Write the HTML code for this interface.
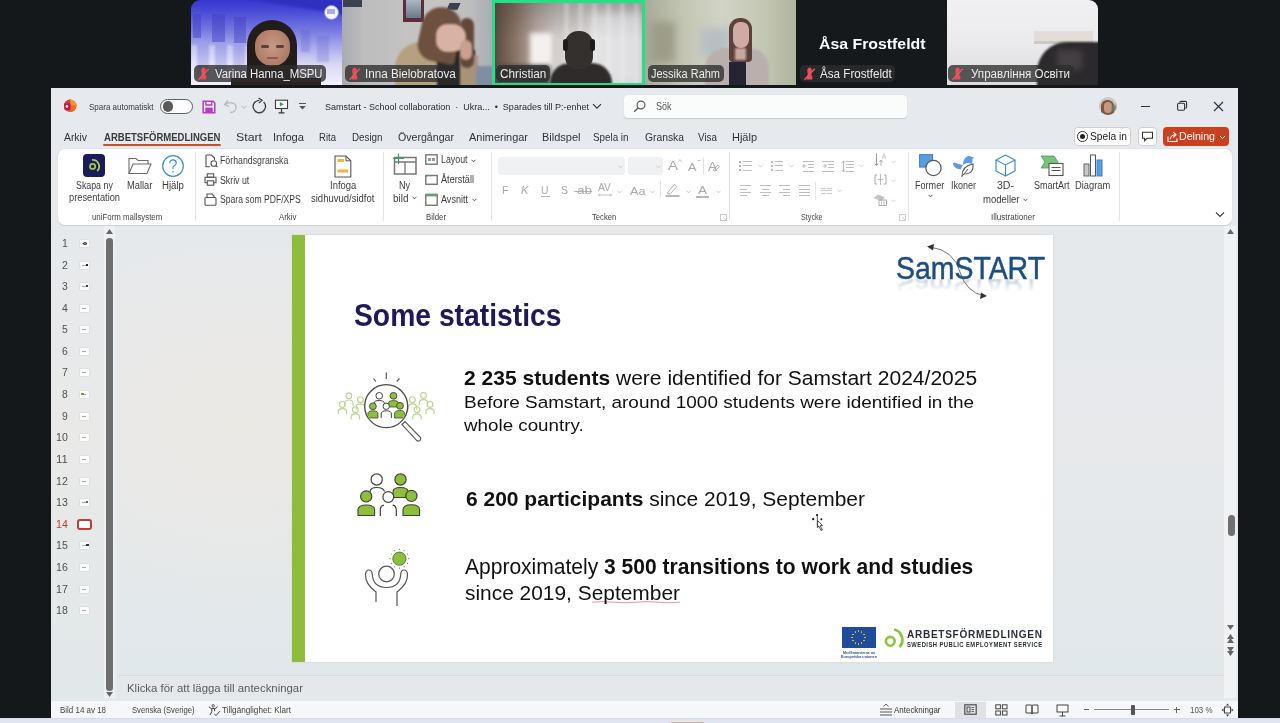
<!DOCTYPE html><html><head><meta charset="utf-8"><style>
*{margin:0;padding:0;box-sizing:border-box}
html,body{width:1280px;height:723px;overflow:hidden;background:#15181b;font-family:"Liberation Sans",sans-serif;position:relative}
.a{position:absolute}
.tx{position:absolute;white-space:nowrap;line-height:normal;transform-origin:0 0}
.t{position:absolute;top:0;height:85px;overflow:hidden}
.lbl{position:absolute;top:64.5px;height:17px;border-radius:5px;background:rgba(45,45,45,0.78)}
svg{position:absolute;overflow:visible}

</style></head><body>
<div class="t" style="left:191px;width:151px;border-radius:9px 0 0 0;background:linear-gradient(180deg,#3636cf 0%,#4a4cd6 14%,#7478e0 35%,#a8aaec 55%,#d6d6f5 75%,#f3f2fb 100%)">
<div class="a" style="left:20px;top:-8px;width:160px;height:14px;background:#2f2fc0;transform:rotate(9deg);filter:blur(1.5px)"></div>
<div class="a" style="left:2px;top:14px;width:8px;height:24px;background:rgba(60,60,190,.45);filter:blur(.6px)"></div>
<div class="a" style="left:21px;top:14px;width:13px;height:28px;background:rgba(60,60,190,.45);filter:blur(.6px)"></div>
<div class="a" style="left:43px;top:17px;width:12px;height:26px;background:rgba(60,60,190,.42);filter:blur(.6px)"></div>
<div class="a" style="left:110px;top:30px;width:9px;height:22px;background:rgba(90,90,200,.3);filter:blur(.8px)"></div>
<div class="a" style="left:126px;top:36px;width:12px;height:26px;background:rgba(90,90,200,.25);filter:blur(.8px)"></div>
<div class="a" style="left:0;top:45px;width:60px;height:30px;background:repeating-linear-gradient(90deg,rgba(255,255,255,.35) 0 6px,rgba(140,140,220,.25) 6px 18px);filter:blur(1px)"></div>
<div class="a" style="left:56px;top:20px;width:50px;height:75px;border-radius:25px 25px 6px 6px;background:#241c1a;filter:blur(.7px)"></div>
<div class="a" style="left:64px;top:30px;width:35px;height:36px;border-radius:15px 15px 17px 17px;background:radial-gradient(ellipse at 50% 45%,#c69a84,#b07e68 65%,#946553);filter:blur(.5px)"></div><div class="a" style="left:70px;top:45px;width:8px;height:3px;border-radius:2px;background:#5e4036;filter:blur(.6px)"></div><div class="a" style="left:85px;top:45px;width:8px;height:3px;border-radius:2px;background:#5e4036;filter:blur(.6px)"></div><div class="a" style="left:76px;top:57px;width:11px;height:2px;border-radius:1px;background:#8a5a4e;filter:blur(.6px)"></div>
<div class="a" style="left:40px;top:78px;width:90px;height:10px;background:#2a2220"></div>
<div class="a" style="left:132.5px;top:4.5px;width:15px;height:15px;border-radius:50%;background:#f4f4fb;border:1.6px solid #8d8fd8"></div>
<div class="a" style="left:136px;top:9px;width:8px;height:5px;background:#7b7ec8;opacity:.6"></div>
</div>
<div class="t" style="left:342px;width:150px;background:linear-gradient(90deg,#a9abb0 0%,#bdbdbe 15%,#c4c3c2 45%,#c6c5c3 65%,#bdbdbd 85%,#a9adb3 100%)">
<div class="a" style="left:1px;top:-2px;width:19px;height:9px;background:#3d414d;filter:blur(.5px)"></div>
<div class="a" style="left:61px;top:-2px;width:21px;height:23.5px;background:#5e2c3a;filter:blur(.4px)"></div>
<div class="a" style="left:63.5px;top:0px;width:15.5px;height:18px;background:linear-gradient(180deg,#aab8c4,#6a7785);filter:blur(.4px)"></div>
<div class="a" style="left:106px;top:3px;width:11px;height:7px;background:#394050;transform:skewX(-25deg);filter:blur(.6px)"></div>
<div class="a" style="left:53px;top:42px;width:60px;height:50px;border-radius:26px 10px 0 0;background:#b7a07f;filter:blur(1px)"></div>
<div class="a" style="left:95px;top:50px;width:38px;height:40px;background:#2b2727;filter:blur(1px)"></div>
<div class="a" style="left:118px;top:55px;width:18px;height:35px;background:#a89378;filter:blur(1px)"></div>
<div class="a" style="left:78px;top:7px;width:40px;height:55px;border-radius:22px 22px 4px 18px;background:#6d503e;transform:rotate(12deg);filter:blur(1px)"></div>
<div class="a" style="left:118px;top:18px;width:14px;height:50px;border-radius:10px;background:#62483a;filter:blur(1px)"></div>
<div class="a" style="left:94px;top:24px;width:30px;height:28px;border-radius:12px 14px 16px 12px;background:#d8b3a3;filter:blur(.8px)"></div>
<div class="a" style="left:118px;top:40px;width:12px;height:20px;border-radius:6px;background:#caa090;filter:blur(.8px)"></div>
<div class="a" style="left:134px;top:66px;width:18px;height:22px;background:#7f8ea3;filter:blur(1px)"></div>
</div>
<div class="t" style="left:492px;width:153px;background:#22e083">
<div class="a" style="left:3px;top:2.5px;width:147px;height:80.5px;overflow:hidden;background:linear-gradient(90deg,#5b4a40 0%,#8b7466 14%,#b9aca5 28%,#d3cfcd 42%,#dcdad9 60%,#d4d4d6 80%,#cacbce 100%)">
<div class="a" style="left:0;top:0;width:147px;height:81px;background:linear-gradient(180deg,rgba(70,60,55,.35) 0%,rgba(70,60,55,0) 45%)"></div><div class="a" style="left:60px;top:0;width:90px;height:81px;background:repeating-linear-gradient(90deg,rgba(255,255,255,0) 0 9px,rgba(255,255,255,.25) 9px 14px);filter:blur(1.5px)"></div><div class="a" style="left:35px;top:30px;width:22px;height:35px;background:#f3f0ee;filter:blur(2.5px)"></div>
<div class="a" style="left:95px;top:10px;width:50px;height:70px;background:rgba(240,240,242,.5);filter:blur(4px)"></div>
<div class="a" style="left:0px;top:62px;width:55px;height:25px;background:#4d4a4b;filter:blur(2px)"></div>
<div class="a" style="left:55px;top:60px;width:62px;height:30px;border-radius:20px 20px 0 0;background:#2e2b2a;filter:blur(1px)"></div>
<div class="a" style="left:70px;top:28px;width:28px;height:38px;border-radius:13px 13px 12px 12px;background:#34302d;filter:blur(.7px)"></div>
<div class="a" style="left:68px;top:36px;width:5px;height:12px;border-radius:3px;background:#1d1b1b"></div>
<div class="a" style="left:95px;top:36px;width:5px;height:12px;border-radius:3px;background:#1d1b1b"></div>
</div></div>
<div class="t" style="left:645px;width:151px;background:linear-gradient(90deg,#a8ab97 0%,#c3c5b3 25%,#d1d3c6 50%,#c6c9b6 75%,#b1b59f 100%)">
<div class="a" style="left:5px;top:22px;width:25px;height:40px;background:#9c9c88;filter:blur(4px)"></div>
<div class="a" style="left:55px;top:28px;width:30px;height:28px;background:#b6c0c3;filter:blur(4px)"></div>
<div class="a" style="left:60px;top:48px;width:64px;height:42px;border-radius:20px 20px 0 0;background:#b9b0ad;filter:blur(.8px)"></div>
<div class="a" style="left:84px;top:62px;width:17px;height:28px;background:#252433;filter:blur(.6px)"></div>
<div class="a" style="left:84px;top:18px;width:23px;height:44px;border-radius:11px 11px 4px 4px;background:#5c403a;filter:blur(.7px)"></div>
<div class="a" style="left:88px;top:22px;width:16px;height:26px;border-radius:8px 8px 9px 9px;background:#d0aaa4;filter:blur(.5px)"></div>
<div class="a" style="left:90px;top:48px;width:11px;height:12px;background:#c9a7a2;filter:blur(.8px)"></div>
</div>
<div class="t" style="left:796px;width:151px;background:#16191c"></div>
<div class="t" style="left:947px;width:151px;border-radius:0 9px 0 0;background:linear-gradient(180deg,#f1f1f3 0%,#ebeaec 50%,#dcdbdd 100%)">
<div class="a" style="left:87px;top:31px;width:59px;height:10px;background:#e2ddd8;filter:blur(.6px)"></div><div class="a" style="left:87px;top:41px;width:59px;height:3px;background:#cfc9c4;filter:blur(.6px)"></div>
<div class="a" style="left:90px;top:42px;width:70px;height:50px;border-radius:30px 0 0 0;background:#2b292b;filter:blur(1px)"></div>
<div class="a" style="left:110px;top:50px;width:25px;height:20px;background:#444044;filter:blur(3px)"></div>
</div>
<div class="lbl" style="left:194px;width:132px"></div>
<svg style="left:196.5px;top:67px" width="13" height="14" viewBox="0 0 13 14"><path d="M5 1.2 Q6.8 -0.2 8.4 1.4 Q9.2 2.6 8.6 5 L8.2 7.5 Q9.6 9 9.4 12.6 H3.6 Q3.4 9 4.8 7.5 L4.4 5 Q3.8 2.6 5 1.2 Z" fill="#ee4a55"/><path d="M1.5 12.8 L11.8 1.8" stroke="#e05a6a" stroke-width="1.3"/></svg>
<div class="lbl" style="left:345px;width:114px"></div>
<svg style="left:347.5px;top:67px" width="13" height="14" viewBox="0 0 13 14"><path d="M5 1.2 Q6.8 -0.2 8.4 1.4 Q9.2 2.6 8.6 5 L8.2 7.5 Q9.6 9 9.4 12.6 H3.6 Q3.4 9 4.8 7.5 L4.4 5 Q3.8 2.6 5 1.2 Z" fill="#ee4a55"/><path d="M1.5 12.8 L11.8 1.8" stroke="#e05a6a" stroke-width="1.3"/></svg>
<div class="lbl" style="left:495.5px;width:54.5px"></div>
<div class="lbl" style="left:648px;width:76px"></div>
<div class="lbl" style="left:800px;width:95px"></div>
<svg style="left:802.5px;top:67px" width="13" height="14" viewBox="0 0 13 14"><path d="M5 1.2 Q6.8 -0.2 8.4 1.4 Q9.2 2.6 8.6 5 L8.2 7.5 Q9.6 9 9.4 12.6 H3.6 Q3.4 9 4.8 7.5 L4.4 5 Q3.8 2.6 5 1.2 Z" fill="#ee4a55"/><path d="M1.5 12.8 L11.8 1.8" stroke="#e05a6a" stroke-width="1.3"/></svg>
<div class="lbl" style="left:948px;width:126px"></div>
<svg style="left:950.5px;top:67px" width="13" height="14" viewBox="0 0 13 14"><path d="M5 1.2 Q6.8 -0.2 8.4 1.4 Q9.2 2.6 8.6 5 L8.2 7.5 Q9.6 9 9.4 12.6 H3.6 Q3.4 9 4.8 7.5 L4.4 5 Q3.8 2.6 5 1.2 Z" fill="#ee4a55"/><path d="M1.5 12.8 L11.8 1.8" stroke="#e05a6a" stroke-width="1.3"/></svg>
<div class="a" style="left:0;top:85px;width:1280px;height:3px;background:#15181b"></div>
<div class="a" style="left:51px;top:88px;width:1187px;height:630px;background:#e6e9ed"></div>
<div class="a" style="left:0;top:718px;width:1280px;height:5px;background:linear-gradient(180deg,#d3d8e0 0,#dfe5f0 1.5px,#dfe4f1 100%)"></div><div class="a" style="left:671px;top:721.5px;width:33px;height:1.5px;background:#eaa3a3;border-radius:1px 1px 0 0"></div>
<svg style="left:63px;top:99px" width="14" height="14" viewBox="0 0 14 14"><circle cx="7.2" cy="6.8" r="6.2" fill="#e9482f"/><path d="M7.2 6.8 V0.6 A6.2 6.2 0 0 1 13.4 6.8 Z" fill="#f89a24"/><path d="M7.2 6.8 H13.4 A6.2 6.2 0 0 1 7.2 13 Z" fill="#ec6a2c"/><path d="M7.2 6.8 V0.6 A6.2 6.2 0 0 0 1 6.8 Z" fill="#dc3a38"/><rect x="1.2" y="4.2" width="6.3" height="6.8" rx="1.3" fill="#b41f4a"/><circle cx="3.9" cy="7.4" r="1.3" fill="#f4e6f0"/></svg>
<div class="a" style="left:160px;top:98.5px;width:33px;height:15.5px;border:1.2px solid #5e5e5e;border-radius:8px;background:#fdfdfd"></div>
<div class="a" style="left:162.5px;top:101px;width:10.5px;height:10.5px;border-radius:50%;background:#5a5a5a"></div>
<svg style="left:202px;top:99.5px" width="14" height="14" viewBox="0 0 14 14"><path d="M1.2 1.2 H11 L12.8 3 V12.8 H1.2 Z" fill="none" stroke="#b23fc2" stroke-width="1.5"/><path d="M3.8 1.2 V5 H9.8 V1.2" fill="none" stroke="#b23fc2" stroke-width="1.3"/><rect x="3.3" y="7.6" width="7.4" height="5.2" fill="#b23fc2"/></svg>
<svg style="left:223px;top:99px" width="26" height="15" viewBox="0 0 26 15"><path d="M5 1.5 L1.5 5.5 L6 7.5" fill="none" stroke="#b8b8b8" stroke-width="1.3"/><path d="M2 5.5 C6 2.5,13 3,13 8.5 C13 11.5,10.5 13.5,7.5 13.5" fill="none" stroke="#b8b8b8" stroke-width="1.3"/><path d="M18.5 7 l2.3 2.3 l2.3-2.3" fill="none" stroke="#bdbdbd" stroke-width="1"/></svg>
<svg style="left:251px;top:98px" width="17" height="17" viewBox="0 0 17 17"><path d="M12.6 4 A6.2 6.2 0 1 1 8.3 2.3" fill="none" stroke="#444" stroke-width="1.35"/><path d="M7.6 0 L11 2.4 L7.8 4.9" fill="none" stroke="#444" stroke-width="1.3"/></svg>
<svg style="left:274px;top:99px" width="15" height="15" viewBox="0 0 15 15"><rect x="1.5" y="1.2" width="12" height="8.3" fill="#fff" stroke="#3b3b3b" stroke-width="1.1"/><path d="M5.8 3 L9.8 5.3 L5.8 7.6 Z" fill="#2f9a4c"/><path d="M7.5 9.5 V13.5 M4.5 13.8 H10.5" stroke="#3b3b3b" stroke-width="1.2"/></svg>
<svg style="left:298px;top:102px" width="9" height="9" viewBox="0 0 9 9"><path d="M1 1.5 H8" stroke="#555" stroke-width="1"/><path d="M1.2 4 L4.5 7.5 L7.8 4 Z" fill="#555"/></svg>
<svg style="left:592px;top:103px" width="10" height="7" viewBox="0 0 10 7"><path d="M1 1.2 L5 5.2 L9 1.2" fill="none" stroke="#333" stroke-width="1.2"/></svg>
<div class="a" style="left:623.5px;top:94.5px;width:283px;height:23.5px;background:#fafbfb;border-radius:4px;box-shadow:0 0.6px 1px rgba(0,0,0,.14)"></div>
<svg style="left:633px;top:99.5px" width="13" height="13" viewBox="0 0 13 13"><circle cx="8" cy="5" r="3.9" fill="none" stroke="#555" stroke-width="1.15"/><path d="M5.2 7.8 L1.2 11.8" stroke="#555" stroke-width="1.3"/></svg>
<div class="a" style="left:1098.6px;top:97.1px;width:18px;height:18px;border-radius:50%;overflow:hidden;background:#cfc7bd"><div class="a" style="left:2px;top:3px;width:13px;height:16px;border-radius:6px 6px 3px 3px;background:#7a5a44;filter:blur(.6px)"></div><div class="a" style="left:5px;top:5px;width:8px;height:11px;border-radius:4px;background:#c8987e;filter:blur(.5px)"></div><div class="a" style="left:13px;top:8px;width:4px;height:6px;background:#6c7a6a;filter:blur(.8px)"></div></div>
<div class="a" style="left:1140.5px;top:105.6px;width:9px;height:1.2px;background:#333"></div>
<svg style="left:1176px;top:100px" width="12" height="12" viewBox="0 0 12 12"><rect x="1.6" y="3.2" width="7" height="7" rx="1.2" fill="none" stroke="#333" stroke-width="1.1"/><path d="M3.6 2.6 Q3.8 1.4 5 1.4 H9.4 Q10.6 1.4 10.6 2.6 V7 Q10.6 8.2 9.4 8.4" fill="none" stroke="#333" stroke-width="1.1"/></svg>
<svg style="left:1213px;top:100.5px" width="11" height="11" viewBox="0 0 11 11"><path d="M1 1 L10 10 M10 1 L1 10" stroke="#333" stroke-width="1.2"/></svg>
<div class="a" style="left:103px;top:143.6px;width:118px;height:2.4px;background:#c2512f;border-radius:1px"></div>
<div class="a" style="left:1073.5px;top:127px;width:57.5px;height:18.5px;background:#fff;border:1px solid #cfcfcf;border-radius:4px"></div>
<div class="a" style="left:1077px;top:131px;width:10.5px;height:10.5px;border-radius:50%;border:1.2px solid #333"></div>
<div class="a" style="left:1079.8px;top:133.8px;width:5px;height:5px;border-radius:50%;background:#222"></div>
<div class="a" style="left:1138px;top:127px;width:18.5px;height:18.5px;background:#fff;border:1px solid #cfcfcf;border-radius:4px"></div>
<svg style="left:1141px;top:131px" width="13" height="11" viewBox="0 0 13 11"><path d="M1.5 1.3 H11.5 V7.3 H6 L3.6 9.6 V7.3 H1.5 Z" fill="none" stroke="#333" stroke-width="1.1"/></svg>
<div class="a" style="left:1162.5px;top:127px;width:66px;height:18.5px;background:#c8401e;border-radius:4px"></div>
<svg style="left:1166px;top:130px" width="13" height="13" viewBox="0 0 13 13"><path d="M2 6.5 V11.5 H11 V8.5" fill="none" stroke="#fff" stroke-width="1.1"/><path d="M4.3 9.3 Q4.8 4.8 9.5 4.8 M7.4 2.2 L10 4.8 L7.4 7.4" fill="none" stroke="#fff" stroke-width="1.1"/></svg>
<svg style="left:1219px;top:134.5px" width="7" height="5" viewBox="0 0 7 5"><path d="M1 1 L3.5 3.5 L6 1" fill="none" stroke="#fff" stroke-width="1"/></svg>
<div class="a" style="left:57.5px;top:148.5px;width:1174px;height:76px;background:#fff;border-radius:7px;box-shadow:0 0.5px 1.5px rgba(0,0,0,0.13)"></div>
<div class="a" style="left:194.5px;top:152px;width:1px;height:69px;background:#e3e3e3"></div>
<div class="a" style="left:382.5px;top:152px;width:1px;height:69px;background:#e3e3e3"></div>
<div class="a" style="left:490.5px;top:152px;width:1px;height:69px;background:#e3e3e3"></div>
<div class="a" style="left:728.5px;top:152px;width:1px;height:69px;background:#e3e3e3"></div>
<div class="a" style="left:907.5px;top:152px;width:1px;height:69px;background:#e3e3e3"></div>
<div class="a" style="left:1118.5px;top:152px;width:1px;height:69px;background:#e3e3e3"></div>
<div class="a" style="left:82.5px;top:154.3px;width:22.5px;height:22.3px;border-radius:4px;background:#1b1a5c"></div>
<svg style="left:82.5px;top:154.3px" width="23" height="23" viewBox="0 0 23 23"><circle cx="9.6" cy="12.4" r="2.6" fill="none" stroke="#a4cc45" stroke-width="1.7"/><path d="M9.03 5.93 A6.5 6.5 0 0 1 14.2 17.0" fill="none" stroke="#a4cc45" stroke-width="1.8"/><path d="M10 5.5 A3 3 0 0 1 9 5.6" fill="none" stroke="#a4cc45" stroke-width="0"/></svg>
<svg style="left:127.5px;top:156.5px" width="24" height="18" viewBox="0 0 24 18"><path d="M1 16.5 V1.5 H8 L10 3.5 H20 V7" fill="none" stroke="#6b6b6b" stroke-width="1.1"/><path d="M1 16.5 L5 7 H23 L19 16.5 Z" fill="#fff" stroke="#6b6b6b" stroke-width="1.1"/></svg>
<svg style="left:161.5px;top:154.5px" width="22" height="22" viewBox="0 0 22 22"><circle cx="11" cy="11" r="10.3" fill="none" stroke="#3b8fd1" stroke-width="1.2"/><path d="M7.8 8.2 Q7.8 4.8 11 4.8 Q14.2 4.8 14.2 7.9 Q14.2 10 11.8 11 Q11 11.5 11 13.2 V14" fill="none" stroke="#3b8fd1" stroke-width="1.2"/><circle cx="11" cy="16.8" r="0.8" fill="#3b8fd1"/></svg>
<svg style="left:204.5px;top:153.5px" width="13" height="14" viewBox="0 0 13 14"><path d="M1 1 H6.5 L9.5 4 V6 M1 1 V12.8 H5" fill="none" stroke="#555" stroke-width="1.1"/><circle cx="8.8" cy="9.5" r="2.8" fill="#fff" stroke="#555" stroke-width="1.1"/><path d="M10.8 11.5 L12.4 13.2" stroke="#555" stroke-width="1.1"/></svg>
<svg style="left:204px;top:173px" width="13" height="13" viewBox="0 0 13 13"><rect x="3.3" y="0.8" width="6.4" height="3.4" fill="none" stroke="#555" stroke-width="1.1"/><path d="M3 9.8 H1 V4.2 H12 V9.8 H10" fill="none" stroke="#555" stroke-width="1.1"/><rect x="3.3" y="7.8" width="6.4" height="4.4" fill="#fff" stroke="#555" stroke-width="1.1"/></svg>
<svg style="left:204px;top:193px" width="13" height="13" viewBox="0 0 13 13"><path d="M3 4 V1 H8 L10 3 V4" fill="none" stroke="#555" stroke-width="1.1"/><rect x="1" y="4.5" width="11" height="7.8" rx="1" fill="none" stroke="#555" stroke-width="1.1"/></svg>
<svg style="left:333.5px;top:154.5px" width="18" height="23" viewBox="0 0 18 23"><path d="M1 1 H12 L16.8 5.8 V22 H1 Z" fill="#fff" stroke="#555" stroke-width="1.1"/><path d="M12 1 V5.8 H16.8" fill="none" stroke="#555" stroke-width="1"/><rect x="3.5" y="4" width="6.5" height="3" fill="#f0b441"/><rect x="3.5" y="14.5" width="10.5" height="3" fill="#f0b441"/></svg>
<svg style="left:393px;top:152.5px" width="24" height="22" viewBox="0 0 24 22"><rect x="1.5" y="4.5" width="21.5" height="16.5" fill="#fff" stroke="#777" stroke-width="1.5"/><path d="M1.5 9 H23 M12 9 V21" stroke="#777" stroke-width="1.3"/><path d="M5.5 0.5 V11 M0 5.5 H11" stroke="#3d9e55" stroke-width="1.2"/></svg>
<svg style="left:411.5px;top:196px" width="5" height="4" viewBox="0 0 5 4"><path d="M0.5 0.8 L2.5 2.8 L4.5 0.8" fill="none" stroke="#444" stroke-width="0.9"/></svg>
<svg style="left:425px;top:154px" width="13" height="11" viewBox="0 0 13 11"><rect x="0.8" y="0.8" width="11.4" height="9.4" fill="#fff" stroke="#777" stroke-width="1.4"/><rect x="3" y="4" width="3" height="3" fill="#999"/><rect x="7" y="4" width="3" height="3" fill="#999"/></svg>
<svg style="left:471px;top:158.5px" width="5" height="4" viewBox="0 0 5 4"><path d="M0.5 0.8 L2.5 2.8 L4.5 0.8" fill="none" stroke="#444" stroke-width="0.9"/></svg>
<svg style="left:425px;top:173.5px" width="13" height="11" viewBox="0 0 13 11"><rect x="0.8" y="1.5" width="11.4" height="8.8" fill="#fff" stroke="#777" stroke-width="1.4"/><path d="M1 3 Q3 0 6 2" fill="none" stroke="#3a8fd1" stroke-width="1"/></svg>
<svg style="left:425px;top:193.3px" width="13" height="13" viewBox="0 0 13 13"><rect x="0.8" y="1.5" width="11.4" height="10.8" fill="#fff" stroke="#777" stroke-width="1.4"/><rect x="0.8" y="0.8" width="11.4" height="2.6" fill="#5aa86a"/></svg>
<svg style="left:472px;top:198px" width="5" height="4" viewBox="0 0 5 4"><path d="M0.5 0.8 L2.5 2.8 L4.5 0.8" fill="none" stroke="#444" stroke-width="0.9"/></svg>
<div class="a" style="left:497.5px;top:156.8px;width:127px;height:18.6px;background:#f0f1f3;border-radius:3px"></div>
<div class="a" style="left:627.5px;top:156.8px;width:35px;height:18.6px;background:#f0f1f3;border-radius:3px"></div>
<svg style="left:618px;top:164.5px" width="5" height="4" viewBox="0 0 5 4"><path d="M0.5 0.8 L2.5 2.8 L4.5 0.8" fill="none" stroke="#c4c4c4" stroke-width="0.9"/></svg>
<svg style="left:656px;top:164.5px" width="5" height="4" viewBox="0 0 5 4"><path d="M0.5 0.8 L2.5 2.8 L4.5 0.8" fill="none" stroke="#c4c4c4" stroke-width="0.9"/></svg>
<div class="a" style="left:703px;top:157px;width:1px;height:17px;background:#e3e3e3"></div>
<svg style="left:712px;top:163px" width="8" height="8" viewBox="0 0 8 8"><path d="M1 7 L6 2 L7.5 3.5 L3 8 Z" fill="none" stroke="#b0b0b0" stroke-width="0.9"/></svg>
<div class="a" style="left:540.5px;top:196px;width:9px;height:1px;background:#b4b4b4"></div>
<div class="a" style="left:574px;top:190.5px;width:18px;height:1px;background:#b4b4b4"></div>
<svg style="left:598px;top:192.5px" width="14" height="4" viewBox="0 0 14 4"><path d="M0.5 2 H13.5 M2 0.5 L0.5 2 L2 3.5 M12 0.5 L13.5 2 L12 3.5" fill="none" stroke="#b0b0b0" stroke-width="0.8"/></svg>
<svg style="left:617px;top:189.5px" width="5" height="4" viewBox="0 0 5 4"><path d="M0.5 0.8 L2.5 2.8 L4.5 0.8" fill="none" stroke="#c0c0c0" stroke-width="0.9"/></svg>
<svg style="left:649.5px;top:189.5px" width="5" height="4" viewBox="0 0 5 4"><path d="M0.5 0.8 L2.5 2.8 L4.5 0.8" fill="none" stroke="#c0c0c0" stroke-width="0.9"/></svg>
<svg style="left:685.5px;top:189.5px" width="5" height="4" viewBox="0 0 5 4"><path d="M0.5 0.8 L2.5 2.8 L4.5 0.8" fill="none" stroke="#c0c0c0" stroke-width="0.9"/></svg>
<svg style="left:716px;top:189.5px" width="5" height="4" viewBox="0 0 5 4"><path d="M0.5 0.8 L2.5 2.8 L4.5 0.8" fill="none" stroke="#c0c0c0" stroke-width="0.9"/></svg>
<div class="a" style="left:660px;top:181px;width:1px;height:17px;background:#e3e3e3"></div>
<svg style="left:664.5px;top:182px" width="15" height="15" viewBox="0 0 15 15"><path d="M3 10 L9.5 2.5 L11.8 4.6 L5.5 11.5 L2.5 12 Z" fill="none" stroke="#b0b0b0" stroke-width="1"/><rect x="0.5" y="13" width="14" height="2" fill="#b8b8b8"/></svg>
<div class="a" style="left:695.5px;top:196px;width:13px;height:2px;background:#b8b8b8"></div>
<svg style="left:720px;top:214px" width="7" height="7" viewBox="0 0 7 7"><rect x="0.5" y="0.5" width="6" height="6" fill="none" stroke="#c8c8c8" stroke-width="0.8"/><path d="M3 3 L6 6" stroke="#c8c8c8" stroke-width="0.8"/></svg>
<div class="a" style="left:739.0px;top:160.6px;width:2.0px;height:2px;background:#b0b0b0"></div><div class="a" style="left:743.0px;top:161.0px;width:8.5px;height:1.1px;background:#bdbdbd"></div><div class="a" style="left:771.0px;top:160.5px;width:1.5px;height:2.2px;background:#b8b8b8"></div><div class="a" style="left:774.5px;top:161.0px;width:8.0px;height:1.1px;background:#bdbdbd"></div><div class="a" style="left:739.0px;top:165.0px;width:2.0px;height:2px;background:#b0b0b0"></div><div class="a" style="left:743.0px;top:165.4px;width:8.5px;height:1.1px;background:#bdbdbd"></div><div class="a" style="left:771.0px;top:164.9px;width:1.5px;height:2.2px;background:#b8b8b8"></div><div class="a" style="left:774.5px;top:165.4px;width:8.0px;height:1.1px;background:#bdbdbd"></div><div class="a" style="left:739.0px;top:169.4px;width:2.0px;height:2px;background:#b0b0b0"></div><div class="a" style="left:743.0px;top:169.8px;width:8.5px;height:1.1px;background:#bdbdbd"></div><div class="a" style="left:771.0px;top:169.3px;width:1.5px;height:2.2px;background:#b8b8b8"></div><div class="a" style="left:774.5px;top:169.8px;width:8.0px;height:1.1px;background:#bdbdbd"></div><div class="a" style="left:802.5px;top:161.0px;width:11.5px;height:1.1px;background:#bdbdbd"></div><div class="a" style="left:807.5px;top:164.3px;width:6.5px;height:1.1px;background:#bdbdbd"></div><div class="a" style="left:807.5px;top:167.3px;width:6.5px;height:1.1px;background:#bdbdbd"></div><div class="a" style="left:802.5px;top:170.5px;width:11.5px;height:1.1px;background:#bdbdbd"></div><svg style="left:802px;top:163px" width="5" height="6" viewBox="0 0 5 6"><path d="M4.5 3 H0.8 M2.5 1 L0.7 3 L2.5 5" fill="none" stroke="#b0b0b0" stroke-width="0.9"/></svg><div class="a" style="left:822.0px;top:161.0px;width:12.0px;height:1.1px;background:#bdbdbd"></div><div class="a" style="left:827.5px;top:164.3px;width:6.5px;height:1.1px;background:#bdbdbd"></div><div class="a" style="left:827.5px;top:167.3px;width:6.5px;height:1.1px;background:#bdbdbd"></div><div class="a" style="left:822.0px;top:170.5px;width:12.0px;height:1.1px;background:#bdbdbd"></div><svg style="left:821.5px;top:163px" width="5" height="6" viewBox="0 0 5 6"><path d="M0.5 3 H4.2 M2.5 1 L4.3 3 L2.5 5" fill="none" stroke="#b0b0b0" stroke-width="0.9"/></svg><div class="a" style="left:846.0px;top:161.0px;width:8.0px;height:1.1px;background:#bdbdbd"></div><div class="a" style="left:846.0px;top:164.3px;width:8.0px;height:1.1px;background:#bdbdbd"></div><div class="a" style="left:846.0px;top:167.3px;width:8.0px;height:1.1px;background:#bdbdbd"></div><div class="a" style="left:846.0px;top:170.5px;width:8.0px;height:1.1px;background:#bdbdbd"></div><svg style="left:841px;top:159.5px" width="5" height="13" viewBox="0 0 5 13"><path d="M2.5 1 V12 M0.8 2.8 L2.5 1 L4.2 2.8 M0.8 10.2 L2.5 12 L4.2 10.2" fill="none" stroke="#b0b0b0" stroke-width="0.9"/></svg>
<svg style="left:757.5px;top:164px" width="5" height="4" viewBox="0 0 5 4"><path d="M0.5 0.8 L2.5 2.8 L4.5 0.8" fill="none" stroke="#c8c8c8" stroke-width="0.9"/></svg>
<svg style="left:789px;top:164px" width="5" height="4" viewBox="0 0 5 4"><path d="M0.5 0.8 L2.5 2.8 L4.5 0.8" fill="none" stroke="#c8c8c8" stroke-width="0.9"/></svg>
<svg style="left:858.5px;top:164px" width="5" height="4" viewBox="0 0 5 4"><path d="M0.5 0.8 L2.5 2.8 L4.5 0.8" fill="none" stroke="#c8c8c8" stroke-width="0.9"/></svg>
<div class="a" style="left:739.5px;top:185.4px;width:11.0px;height:1.1px;background:#bdbdbd"></div><div class="a" style="left:760.0px;top:185.4px;width:11.0px;height:1.1px;background:#bdbdbd"></div><div class="a" style="left:779.3px;top:185.4px;width:11.0px;height:1.1px;background:#bdbdbd"></div><div class="a" style="left:799.2px;top:185.4px;width:11.0px;height:1.1px;background:#bdbdbd"></div><div class="a" style="left:739.5px;top:188.6px;width:7.5px;height:1.1px;background:#bdbdbd"></div><div class="a" style="left:761.8px;top:188.6px;width:7.5px;height:1.1px;background:#bdbdbd"></div><div class="a" style="left:782.8px;top:188.6px;width:7.5px;height:1.1px;background:#bdbdbd"></div><div class="a" style="left:799.2px;top:188.6px;width:11.0px;height:1.1px;background:#bdbdbd"></div><div class="a" style="left:739.5px;top:191.8px;width:11.0px;height:1.1px;background:#bdbdbd"></div><div class="a" style="left:760.0px;top:191.8px;width:11.0px;height:1.1px;background:#bdbdbd"></div><div class="a" style="left:779.3px;top:191.8px;width:11.0px;height:1.1px;background:#bdbdbd"></div><div class="a" style="left:799.2px;top:191.8px;width:11.0px;height:1.1px;background:#bdbdbd"></div><div class="a" style="left:739.5px;top:195.0px;width:7.5px;height:1.1px;background:#bdbdbd"></div><div class="a" style="left:761.8px;top:195.0px;width:7.5px;height:1.1px;background:#bdbdbd"></div><div class="a" style="left:782.8px;top:195.0px;width:7.5px;height:1.1px;background:#bdbdbd"></div><div class="a" style="left:799.2px;top:195.0px;width:11.0px;height:1.1px;background:#bdbdbd"></div><div class="a" style="left:815px;top:182px;width:1px;height:18px;background:#e6e6e6"></div><div class="a" style="left:821.0px;top:187.5px;width:4.5px;height:1.1px;background:#c8c8c8"></div><div class="a" style="left:827.0px;top:187.5px;width:4.5px;height:1.1px;background:#c8c8c8"></div><div class="a" style="left:821.0px;top:190.3px;width:10.5px;height:1.1px;background:#c8c8c8"></div><div class="a" style="left:821.0px;top:193.0px;width:4.5px;height:1.1px;background:#c8c8c8"></div><div class="a" style="left:827.0px;top:193.0px;width:4.5px;height:1.1px;background:#c8c8c8"></div>
<svg style="left:837px;top:189px" width="5" height="4" viewBox="0 0 5 4"><path d="M0.5 0.8 L2.5 2.8 L4.5 0.8" fill="none" stroke="#c8c8c8" stroke-width="0.9"/></svg>
<svg style="left:874px;top:153px" width="13" height="14" viewBox="0 0 13 14"><path d="M2.5 0.5 V12.5 M0.8 10.5 L2.5 12.5 L4.2 10.5" fill="none" stroke="#9a9a9a" stroke-width="1"/><path d="M7 13 V7 M5.3 9 L7 7 L8.7 9" fill="none" stroke="#a8a8a8" stroke-width="0.9"/><path d="M8 6 L10 0.5 L12 6 M8.8 4 H11.2" fill="none" stroke="#c4c4c4" stroke-width="0.8"/></svg>
<svg style="left:873.5px;top:174px" width="13" height="11" viewBox="0 0 13 11"><path d="M3 1 H1 V10 H3 M10 1 H12 V10 H10" fill="none" stroke="#a8a8a8" stroke-width="1"/><path d="M6.5 0 V11 M4 5.5 H9" stroke="#b0b0b0" stroke-width="0.9"/></svg>
<svg style="left:873px;top:193.5px" width="14" height="12" viewBox="0 0 14 12"><path d="M0.5 4 L5 0.5 L12 3.5 L8 7 Z" fill="#c4c4c4"/><rect x="6" y="6" width="7.5" height="5.5" fill="none" stroke="#a8a8a8" stroke-width="0.9"/><path d="M8.5 6 V11.5 M11 6 V11.5" stroke="#b0b0b0" stroke-width="0.7"/></svg>
<svg style="left:890.5px;top:159.5px" width="5" height="4" viewBox="0 0 5 4"><path d="M0.5 0.8 L2.5 2.8 L4.5 0.8" fill="none" stroke="#c8c8c8" stroke-width="0.9"/></svg>
<svg style="left:890.5px;top:178.5px" width="5" height="4" viewBox="0 0 5 4"><path d="M0.5 0.8 L2.5 2.8 L4.5 0.8" fill="none" stroke="#c8c8c8" stroke-width="0.9"/></svg>
<svg style="left:890.5px;top:199px" width="5" height="4" viewBox="0 0 5 4"><path d="M0.5 0.8 L2.5 2.8 L4.5 0.8" fill="none" stroke="#c8c8c8" stroke-width="0.9"/></svg>
<svg style="left:899px;top:214px" width="7" height="7" viewBox="0 0 7 7"><rect x="0.5" y="0.5" width="6" height="6" fill="none" stroke="#c8c8c8" stroke-width="0.8"/><path d="M3 3 L6 6" stroke="#c8c8c8" stroke-width="0.8"/></svg>
<svg style="left:720px;top:214px" width="7" height="7" viewBox="0 0 7 7"><rect x="0.5" y="0.5" width="6" height="6" fill="none" stroke="#c8c8c8" stroke-width="0.8"/></svg>
<svg style="left:918.5px;top:154.3px" width="24" height="23" viewBox="0 0 24 23"><rect x="0.6" y="0.6" width="13" height="12.5" fill="#5a9ee0" stroke="#3a80c8" stroke-width="1"/><circle cx="14.5" cy="14" r="7.6" fill="#fff" stroke="#555" stroke-width="1.2"/></svg>
<svg style="left:927.5px;top:194px" width="5" height="4" viewBox="0 0 5 4"><path d="M0.5 0.8 L2.5 2.8 L4.5 0.8" fill="none" stroke="#444" stroke-width="0.9"/></svg>
<svg style="left:951.5px;top:153.5px" width="24" height="24" viewBox="0 0 24 24"><path d="M1 9 Q4 8 6 10 L11 11 Q11 6 14 3 Q17 1 20 3 L22 3 L20.5 5 Q21 9 18 12 Q13 16 6 15 Q1 13 1 9 Z" fill="#5a9ee0"/><circle cx="16" cy="16" r="7" fill="#fff"/><path d="M10 22 Q10 12 21 10 Q22 20 12 20" fill="#fff" stroke="#555" stroke-width="1.1"/><path d="M9.5 23 L16 15" stroke="#555" stroke-width="1"/></svg>
<svg style="left:995px;top:153.5px" width="21" height="23" viewBox="0 0 21 23"><path d="M10.5 1 L20 6 V17 L10.5 22 L1 17 V6 Z" fill="#fff" stroke="#3a8fd1" stroke-width="1.2"/><path d="M1 6 L10.5 11 L20 6 M10.5 11 V22" fill="none" stroke="#3a8fd1" stroke-width="1.1"/></svg>
<svg style="left:1022.5px;top:198px" width="5" height="4" viewBox="0 0 5 4"><path d="M0.5 0.8 L2.5 2.8 L4.5 0.8" fill="none" stroke="#444" stroke-width="0.9"/></svg>
<svg style="left:1040px;top:154.5px" width="24" height="22" viewBox="0 0 24 22"><path d="M1 1 H14 L18 7 L14 13 H1 L5 7 Z" fill="#78c47e" stroke="#4a9a52" stroke-width="0.8"/><rect x="9" y="8.5" width="14" height="12" fill="#fff" stroke="#555" stroke-width="1.1"/><path d="M11.5 12.5 H20.5 M11.5 15.5 H20.5" stroke="#555" stroke-width="1"/></svg>
<svg style="left:1082.5px;top:154px" width="20" height="23" viewBox="0 0 20 23"><rect x="1" y="10" width="5" height="12" fill="#c8c8c8" stroke="#666" stroke-width="1"/><rect x="7.5" y="1" width="5" height="21" fill="#fff" stroke="#555" stroke-width="1"/><rect x="14" y="6" width="5" height="16" fill="#5a9ee0" stroke="#3a80c8" stroke-width="1"/></svg>
<svg style="left:1215px;top:210.5px" width="10" height="7" viewBox="0 0 10 7"><path d="M1 1.5 L5 5.5 L9 1.5" fill="none" stroke="#444" stroke-width="1.2"/></svg>
<div class="a" style="left:51px;top:226px;width:53px;height:475px;background:linear-gradient(180deg,#e6e9ec 0%,#e9e9e8 45%,#e1e8ea 100%)"></div>
<div class="a" style="left:104px;top:226px;width:11px;height:472px;background:#eef0f2"></div>
<svg style="left:105px;top:228px" width="9" height="7" viewBox="0 0 9 7"><path d="M1 6 L4.5 1 L8 6 Z" fill="#666"/></svg>
<div class="a" style="left:106px;top:237.5px;width:6.5px;height:453px;border-radius:3.3px;background:#6e6e6e"></div>
<svg style="left:105px;top:691px" width="9" height="7" viewBox="0 0 9 7"><path d="M1 1 L4.5 6 L8 1 Z" fill="#666"/></svg>
<div class="a" style="left:80px;top:240px;width:9px;height:6.5px;background:#fbfbfb;box-shadow:0 0 0.8px rgba(0,0,0,.35)"></div><div class="a" style="left:81.5px;top:242.5px;width:4px;height:1px;background:#aaa"></div><div class="a" style="left:83px;top:242px;width:4px;height:3px;border:1px solid #333;border-radius:50%"></div>
<div class="a" style="left:80px;top:262px;width:9px;height:6.5px;background:#fbfbfb;box-shadow:0 0 0.8px rgba(0,0,0,.35)"></div><div class="a" style="left:81.5px;top:264.5px;width:4px;height:1px;background:#aaa"></div><div class="a" style="left:86px;top:264px;width:2px;height:2px;background:#222"></div>
<div class="a" style="left:80px;top:283px;width:9px;height:6.5px;background:#fbfbfb;box-shadow:0 0 0.8px rgba(0,0,0,.35)"></div><div class="a" style="left:81.5px;top:285.5px;width:4px;height:1px;background:#aaa"></div><div class="a" style="left:86px;top:285px;width:2px;height:2px;background:#444"></div>
<div class="a" style="left:80px;top:305px;width:9px;height:6.5px;background:#fbfbfb;box-shadow:0 0 0.8px rgba(0,0,0,.35)"></div><div class="a" style="left:81.5px;top:307.5px;width:4px;height:1px;background:#aaa"></div>
<div class="a" style="left:80px;top:326px;width:9px;height:6.5px;background:#fbfbfb;box-shadow:0 0 0.8px rgba(0,0,0,.35)"></div><div class="a" style="left:81.5px;top:328.5px;width:4px;height:1px;background:#aaa"></div>
<div class="a" style="left:80px;top:348px;width:9px;height:6.5px;background:#fbfbfb;box-shadow:0 0 0.8px rgba(0,0,0,.35)"></div><div class="a" style="left:81.5px;top:350.5px;width:4px;height:1px;background:#aaa"></div>
<div class="a" style="left:80px;top:369px;width:9px;height:6.5px;background:#fbfbfb;box-shadow:0 0 0.8px rgba(0,0,0,.35)"></div><div class="a" style="left:81.5px;top:371.5px;width:4px;height:1px;background:#aaa"></div>
<div class="a" style="left:80px;top:391px;width:9px;height:6.5px;background:#fbfbfb;box-shadow:0 0 0.8px rgba(0,0,0,.35)"></div><div class="a" style="left:81.5px;top:393.5px;width:4px;height:1px;background:#aaa"></div><div class="a" style="left:81px;top:393px;width:3px;height:2px;background:#7a9a40"></div>
<div class="a" style="left:80px;top:413px;width:9px;height:6.5px;background:#fbfbfb;box-shadow:0 0 0.8px rgba(0,0,0,.35)"></div><div class="a" style="left:81.5px;top:415.5px;width:4px;height:1px;background:#aaa"></div>
<div class="a" style="left:80px;top:434px;width:9px;height:6.5px;background:#fbfbfb;box-shadow:0 0 0.8px rgba(0,0,0,.35)"></div><div class="a" style="left:81.5px;top:436.5px;width:4px;height:1px;background:#aaa"></div>
<div class="a" style="left:80px;top:456px;width:9px;height:6.5px;background:#fbfbfb;box-shadow:0 0 0.8px rgba(0,0,0,.35)"></div><div class="a" style="left:81.5px;top:458.5px;width:4px;height:1px;background:#aaa"></div>
<div class="a" style="left:80px;top:478px;width:9px;height:6.5px;background:#fbfbfb;box-shadow:0 0 0.8px rgba(0,0,0,.35)"></div><div class="a" style="left:81.5px;top:480.5px;width:4px;height:1px;background:#aaa"></div>
<div class="a" style="left:80px;top:499px;width:9px;height:6.5px;background:#fbfbfb;box-shadow:0 0 0.8px rgba(0,0,0,.35)"></div><div class="a" style="left:81.5px;top:501.5px;width:4px;height:1px;background:#aaa"></div><div class="a" style="left:86px;top:501px;width:2px;height:2px;background:#666"></div>
<div class="a" style="left:77px;top:518.5px;width:14.5px;height:11px;border:2px solid #b5413a;border-radius:3px;background:#fff"></div>
<div class="a" style="left:80px;top:542px;width:9px;height:6.5px;background:#fbfbfb;box-shadow:0 0 0.8px rgba(0,0,0,.35)"></div><div class="a" style="left:81.5px;top:544.5px;width:4px;height:1px;background:#aaa"></div><div class="a" style="left:86px;top:544px;width:2.5px;height:2px;background:#333"></div>
<div class="a" style="left:80px;top:564px;width:9px;height:6.5px;background:#fbfbfb;box-shadow:0 0 0.8px rgba(0,0,0,.35)"></div><div class="a" style="left:81.5px;top:566.5px;width:4px;height:1px;background:#aaa"></div>
<div class="a" style="left:80px;top:586px;width:9px;height:6.5px;background:#fbfbfb;box-shadow:0 0 0.8px rgba(0,0,0,.35)"></div><div class="a" style="left:81.5px;top:588.5px;width:4px;height:1px;background:#aaa"></div>
<div class="a" style="left:80px;top:607px;width:9px;height:6.5px;background:#fbfbfb;box-shadow:0 0 0.8px rgba(0,0,0,.35)"></div><div class="a" style="left:81.5px;top:609.5px;width:4px;height:1px;background:#aaa"></div>
<div class="a" style="left:118px;top:226px;width:1106px;height:449px;background:radial-gradient(ellipse 260px 200px at 120px 200px,rgba(236,233,228,0.9),rgba(236,233,228,0) 100%),linear-gradient(180deg,#e6e9ec 0%,#e7e9eb 50%,#e1e8eb 100%)"></div>
<div class="a" style="left:1224px;top:226px;width:12px;height:472px;background:#f0f2f4"></div>
<svg style="left:1226px;top:228px" width="9" height="7" viewBox="0 0 9 7"><path d="M1 6 L4.5 1 L8 6 Z" fill="#666"/></svg>
<div class="a" style="left:1227.5px;top:515px;width:7px;height:21px;border-radius:3.5px;background:#707070"></div>
<svg style="left:1226px;top:624px" width="9" height="36" viewBox="0 0 9 36"><path d="M1 1 L4.5 6 L8 1 Z" fill="#666"/><path d="M1 15 L4.5 10 L8 15 Z M1 19 L4.5 14 L8 19 Z" fill="#666"/><path d="M1 23 L4.5 28 L8 23 Z M1 27 L4.5 32 L8 27 Z" fill="#666"/></svg>
<div class="a" style="left:118px;top:674.5px;width:1106px;height:1px;background:#d9dcdf"></div>
<div class="a" style="left:118px;top:675.5px;width:1106px;height:25px;background:#e5e8eb"></div>
<div class="a" style="left:51px;top:700.5px;width:1187px;height:17.5px;background:#f6f7f8"></div>
<svg style="left:208px;top:703.5px" width="13" height="13" viewBox="0 0 13 13"><circle cx="5.2" cy="1.8" r="1.2" fill="none" stroke="#444" stroke-width="0.9"/><path d="M1 2.5 Q2 4.5 3.6 4.5 H6.8 Q8.4 4.5 9.4 2.5 M3.8 4.6 V7.5 L2 11 M6.6 4.6 V7.2" fill="none" stroke="#444" stroke-width="1"/><path d="M6.3 9.8 L8 11.6 L11.8 7.2" fill="none" stroke="#444" stroke-width="1"/></svg>
<svg style="left:879px;top:702.5px" width="14" height="14" viewBox="0 0 14 14"><path d="M1 6 H13 M1 9 H13 M1 12 H13" stroke="#555" stroke-width="1"/><path d="M4.5 3.5 L7 1 L9.5 3.5" fill="none" stroke="#555" stroke-width="0.9"/></svg>
<div class="a" style="left:955px;top:701.5px;width:31px;height:16.5px;background:#dfe1e4"></div>
<svg style="left:964px;top:704px" width="13" height="11" viewBox="0 0 13 11"><rect x="0.8" y="0.8" width="11.4" height="9.4" fill="none" stroke="#444" stroke-width="1.1"/><rect x="3" y="3" width="3" height="5" fill="none" stroke="#444" stroke-width="0.9"/><path d="M7.5 3.5 H10 M7.5 5.5 H10 M7.5 7.5 H10" stroke="#444" stroke-width="0.8"/></svg>
<svg style="left:995px;top:703.5px" width="13" height="12" viewBox="0 0 13 12"><rect x="0.8" y="0.8" width="4.6" height="4" fill="none" stroke="#444" stroke-width="1"/><rect x="7.4" y="0.8" width="4.6" height="4" fill="none" stroke="#444" stroke-width="1"/><rect x="0.8" y="7" width="4.6" height="4" fill="none" stroke="#444" stroke-width="1"/><rect x="7.4" y="7" width="4.6" height="4" fill="none" stroke="#444" stroke-width="1"/></svg>
<svg style="left:1025px;top:704px" width="14" height="11" viewBox="0 0 14 11"><path d="M1 1 H6 Q7 1 7 2 V10 Q7 9 6 9 H1 Z M13 1 H8 Q7 1 7 2 V10 Q7 9 8 9 H13 Z" fill="none" stroke="#444" stroke-width="1"/></svg>
<svg style="left:1056px;top:703.5px" width="13" height="13" viewBox="0 0 13 13"><rect x="1" y="1" width="11" height="7" fill="none" stroke="#444" stroke-width="1"/><path d="M6.5 8 V12 M3.5 12 H9.5" stroke="#444" stroke-width="1"/></svg>
<div class="a" style="left:1083.5px;top:709px;width:5px;height:1px;background:#666"></div>
<div class="a" style="left:1093.5px;top:709px;width:75.5px;height:1px;background:#888"></div>
<div class="a" style="left:1130.5px;top:704.5px;width:4px;height:10px;background:#555;border-radius:1px"></div>
<div class="a" style="left:1173.5px;top:709px;width:6px;height:1px;background:#666"></div><div class="a" style="left:1176px;top:706.5px;width:1px;height:6px;background:#666"></div>
<svg style="left:1221px;top:702.5px" width="13" height="14" viewBox="0 0 13 14"><rect x="3.5" y="4" width="6" height="6" fill="none" stroke="#444" stroke-width="1"/><path d="M6.5 0.5 L4.8 2.5 H8.2 Z M6.5 13.5 L4.8 11.5 H8.2 Z M0.5 7 L2.5 5.3 V8.7 Z M12.5 7 L10.5 5.3 V8.7 Z" fill="#444"/></svg>
<div class="a" style="left:291.5px;top:234.5px;width:761px;height:427.5px;background:#fff;box-shadow:0 0 1.5px rgba(0,0,0,0.15)"></div>
<div class="a" style="left:292px;top:235px;width:13px;height:427px;background:#8dbd3a"></div>
<svg style="left:592px;top:600px" width="90" height="4" viewBox="0 0 90 4"><path d="M0 2.2 Q11 1 22 2.2 T44 2.2 T66 2.2 T88 2.2" fill="none" stroke="#e08a90" stroke-width="0.9"/></svg>
<svg style="left:810px;top:512px" width="16" height="20" viewBox="0 0 16 20"><circle cx="7.1" cy="3.1" r="1.1" fill="#111"/><circle cx="3.2" cy="7.2" r="1.1" fill="#111"/><circle cx="11.3" cy="7.2" r="1" fill="#111"/><path d="M7.3 3 V15.5" stroke="#333" stroke-width="0.8"/><path d="M7.6 8.5 L12.5 13.5 L10.3 13.6 L12.3 18 L11 18.5 L9 14.2 L7.6 15.5 Z" fill="#fff" stroke="#222" stroke-width="0.8"/></svg>
<div class="a" style="left:896px;top:279px;width:150px;height:13px;overflow:hidden;opacity:0.35;filter:blur(0.8px);-webkit-mask-image:linear-gradient(180deg,#000,transparent)"><div style="position:absolute;left:0;top:-13.5px;font-size:29.5px;color:#1c4e80;transform:scaleY(-1) scaleX(0.93);transform-origin:0 50%;white-space:nowrap">SamSTART</div></div>
<svg style="left:924px;top:242px" width="66" height="58" viewBox="0 0 66 58"><path d="M6 5 Q30 8 36 30 Q42 50 60 54" fill="none" stroke="#777" stroke-width="1"/><path d="M3 4.5 L10 2 L9 8.5 Z" fill="#333"/><path d="M63 54 L56 57 L57 50.5 Z" fill="#333"/></svg>
<div class="a" style="left:841.5px;top:627px;width:34px;height:21px;background:#1f4d9b"></div>
<div class="a" style="left:864.3px;top:636.8px;width:1.4px;height:1.4px;background:#f5d000;border-radius:50%"></div><div class="a" style="left:863.4px;top:640.0px;width:1.4px;height:1.4px;background:#f5d000;border-radius:50%"></div><div class="a" style="left:861.0px;top:642.4px;width:1.4px;height:1.4px;background:#f5d000;border-radius:50%"></div><div class="a" style="left:857.8px;top:643.3px;width:1.4px;height:1.4px;background:#f5d000;border-radius:50%"></div><div class="a" style="left:854.5px;top:642.4px;width:1.4px;height:1.4px;background:#f5d000;border-radius:50%"></div><div class="a" style="left:852.2px;top:640.0px;width:1.4px;height:1.4px;background:#f5d000;border-radius:50%"></div><div class="a" style="left:851.3px;top:636.8px;width:1.4px;height:1.4px;background:#f5d000;border-radius:50%"></div><div class="a" style="left:852.2px;top:633.5px;width:1.4px;height:1.4px;background:#f5d000;border-radius:50%"></div><div class="a" style="left:854.5px;top:631.2px;width:1.4px;height:1.4px;background:#f5d000;border-radius:50%"></div><div class="a" style="left:857.8px;top:630.3px;width:1.4px;height:1.4px;background:#f5d000;border-radius:50%"></div><div class="a" style="left:861.0px;top:631.2px;width:1.4px;height:1.4px;background:#f5d000;border-radius:50%"></div><div class="a" style="left:863.4px;top:633.5px;width:1.4px;height:1.4px;background:#f5d000;border-radius:50%"></div>
<svg style="left:883px;top:627px" width="22" height="22" viewBox="0 0 22 22"><circle cx="7.3" cy="14.3" r="4.4" fill="none" stroke="#8cc43f" stroke-width="2.6"/><path d="M11 2.5 A10.5 10.5 0 0 1 16.5 20" fill="none" stroke="#8cc43f" stroke-width="2.8"/></svg>
<svg style="left:0;top:0" width="1280" height="723"><circle cx="348.8" cy="395.8" r="2.9" fill="none" stroke="#b9d38f" stroke-width="1.1"/><path d="M344.595 405.66 V403.34000000000003 Q344.595 400.005 348.8 400.005 Q353.005 400.005 353.005 403.34000000000003 V405.66" fill="none" stroke="#b9d38f" stroke-width="1.1"/><circle cx="342.4" cy="404.4" r="2.9" fill="none" stroke="#b9d38f" stroke-width="1.1"/><path d="M338.195 414.26 V411.94 Q338.195 408.60499999999996 342.4 408.60499999999996 Q346.60499999999996 408.60499999999996 346.60499999999996 411.94 V414.26" fill="none" stroke="#b9d38f" stroke-width="1.1"/><circle cx="360.4" cy="399.7" r="2.9" fill="none" stroke="#b9d38f" stroke-width="1.1"/><path d="M356.195 409.56 V407.24 Q356.195 403.905 360.4 403.905 Q364.60499999999996 403.905 364.60499999999996 407.24 V409.56" fill="none" stroke="#b9d38f" stroke-width="1.1"/><circle cx="355.3" cy="409.7" r="2.9" fill="none" stroke="#b9d38f" stroke-width="1.1"/><path d="M351.095 419.56 V417.24 Q351.095 413.905 355.3 413.905 Q359.505 413.905 359.505 417.24 V419.56" fill="none" stroke="#b9d38f" stroke-width="1.1"/><circle cx="412.4" cy="399.7" r="2.9" fill="none" stroke="#b9d38f" stroke-width="1.1"/><path d="M408.195 409.56 V407.24 Q408.195 403.905 412.4 403.905 Q416.60499999999996 403.905 416.60499999999996 407.24 V409.56" fill="none" stroke="#b9d38f" stroke-width="1.1"/><circle cx="423.5" cy="395.4" r="2.9" fill="none" stroke="#b9d38f" stroke-width="1.1"/><path d="M419.295 405.26 V402.94 Q419.295 399.60499999999996 423.5 399.60499999999996 Q427.705 399.60499999999996 427.705 402.94 V405.26" fill="none" stroke="#b9d38f" stroke-width="1.1"/><circle cx="430" cy="404.4" r="2.9" fill="none" stroke="#b9d38f" stroke-width="1.1"/><path d="M425.795 414.26 V411.94 Q425.795 408.60499999999996 430 408.60499999999996 Q434.205 408.60499999999996 434.205 411.94 V414.26" fill="none" stroke="#b9d38f" stroke-width="1.1"/><circle cx="417" cy="409.7" r="2.9" fill="none" stroke="#b9d38f" stroke-width="1.1"/><path d="M412.795 419.56 V417.24 Q412.795 413.905 417 413.905 Q421.205 413.905 421.205 417.24 V419.56" fill="none" stroke="#b9d38f" stroke-width="1.1"/><circle cx="386.2" cy="406.2" r="21.5" fill="#fff" stroke="#4a4a4a" stroke-width="1.3"/><path d="M373.5 378.5 L375.9 381.5 M386.3 372.6 V379.1 M399.4 378.5 L396.8 381.5" stroke="#555" stroke-width="1.2"/><path d="M402 424.5 L405 421.5 L420.8 437.8 Q421.2 439.5 419.5 440.8 Q418 441.5 416.8 440.5 Z" fill="#fff" stroke="#555" stroke-width="1.1"/><clipPath id="mc"><circle cx="386.2" cy="406.2" r="20.6"/></clipPath><g clip-path="url(#mc)"><path d="M374 403.5 Q374 400.5 379.2 400.5 Q384.4 400.5 384.4 403.5" fill="none" stroke="#3e4438" stroke-width="1"/><path d="M388.6 407 V403 Q388.6 400.6 393.5 400.6 Q398.4 400.6 398.4 403 V407 Z" fill="#8dbf3d" stroke="#3e4438" stroke-width="0.8"/><circle cx="379.2" cy="395.8" r="3.3" fill="#fff" stroke="#3e4438" stroke-width="1"/><circle cx="393.5" cy="395.8" r="3.4" fill="#8dbf3d" stroke="#3e4438" stroke-width="0.9"/><path d="M367.8 418 V414 Q367.8 410.8 372.9 410.8 Q378 410.8 378 414 V418 Z" fill="#8dbf3d" stroke="#3e4438" stroke-width="0.8"/><path d="M381.2 418 V414 Q381.2 410.8 386.3 410.8 Q391.4 410.8 391.4 414 V418" fill="#fff" stroke="#3e4438" stroke-width="1"/><path d="M394.6 418 V414 Q394.6 410.4 399.7 410.4 Q404.8 410.4 404.8 414 V418 Z" fill="#8dbf3d" stroke="#3e4438" stroke-width="0.8"/><circle cx="372.9" cy="406.3" r="3.4" fill="#8dbf3d" stroke="#3e4438" stroke-width="0.9"/><circle cx="386.2" cy="406.3" r="3.2" fill="#fff" stroke="#3e4438" stroke-width="1"/><circle cx="400" cy="405.8" r="3.4" fill="#8dbf3d" stroke="#3e4438" stroke-width="0.9"/></g><path d="M370 492 Q370 487.5 376.7 487.5 Q383.4 487.5 384.5 491.5" fill="none" stroke="#3e4438" stroke-width="1.2"/><path d="M393 497.5 V491.5 Q393 487.5 400.5 487.5 Q408 487.5 408 491.5 V497.5 Z" fill="#8dbf3d" stroke="#3e4438" stroke-width="1.1"/><circle cx="376.7" cy="479.5" r="5.6" fill="#fff" stroke="#3e4438" stroke-width="1.2"/><circle cx="400.5" cy="479.5" r="5.6" fill="#8dbf3d" stroke="#3e4438" stroke-width="1.2"/><path d="M358 515.5 V510 Q358 505 366.3 505 Q374.6 505 374.6 510 V515.5 Z" fill="#8dbf3d" stroke="#3e4438" stroke-width="1.1"/><path d="M380.3 516 V510.5 Q380.3 505.5 384 505.2 M392.6 505.2 Q396.3 505.5 396.3 510.5 V516" fill="none" stroke="#3e4438" stroke-width="1.2"/><path d="M403 515.5 V510 Q403 504.8 411.3 504.8 Q419.6 504.8 419.6 510 V515.5 Z" fill="#8dbf3d" stroke="#3e4438" stroke-width="1.1"/><circle cx="366.2" cy="496.4" r="5.6" fill="#8dbf3d" stroke="#3e4438" stroke-width="1.2"/><circle cx="388.3" cy="497" r="5.4" fill="#fff" stroke="#3e4438" stroke-width="1.2"/><circle cx="411.4" cy="495.9" r="5.6" fill="#8dbf3d" stroke="#3e4438" stroke-width="1.2"/><path d="M376 602 V592 Q365 584 365.5 574 Q366 570 368.8 570 Q372 570 372.2 574 Q373 587.5 386.5 587.5 Q400 587.5 400.8 574 Q401 570 404 570 Q407 570 407.5 574 Q408 584 397 592 V606" fill="none" stroke="#555" stroke-width="1.2"/><circle cx="386.5" cy="574" r="7.8" fill="#fff" stroke="#555" stroke-width="1.2"/><circle cx="408.80" cy="558.70" r="0.6" fill="#667"/><circle cx="407.54" cy="563.40" r="0.6" fill="#667"/><circle cx="404.10" cy="566.84" r="0.6" fill="#667"/><circle cx="399.40" cy="568.10" r="0.6" fill="#667"/><circle cx="394.70" cy="566.84" r="0.6" fill="#667"/><circle cx="391.26" cy="563.40" r="0.6" fill="#667"/><circle cx="390.00" cy="558.70" r="0.6" fill="#667"/><circle cx="391.26" cy="554.00" r="0.6" fill="#667"/><circle cx="394.70" cy="550.56" r="0.6" fill="#667"/><circle cx="399.40" cy="549.30" r="0.6" fill="#667"/><circle cx="404.10" cy="550.56" r="0.6" fill="#667"/><circle cx="407.54" cy="554.00" r="0.6" fill="#667"/><circle cx="399.4" cy="558.7" r="6.6" fill="#8dbf3d" stroke="#4d6b2c" stroke-width="0.9"/></svg>
<div class="tx" id="t0" style="left:214.5px;top:67.49px;font-size:12.5px;color:#ececec;font-weight:normal;transform:scaleX(0.9065);">Varina Hanna_MSPU</div>
<div class="tx" id="t1" style="left:365.3px;top:67.49px;font-size:12.5px;color:#ececec;font-weight:normal;transform:scaleX(0.9322);">Inna Bielobratova</div>
<div class="tx" id="t2" style="left:499.7px;top:67.49px;font-size:12.5px;color:#ececec;font-weight:normal;transform:scaleX(0.9386);">Christian</div>
<div class="tx" id="t3" style="left:651px;top:67.49px;font-size:12.5px;color:#ececec;font-weight:normal;transform:scaleX(0.8790);">Jessika Rahm</div>
<div class="tx" id="t4" style="left:819.6px;top:67.49px;font-size:12.5px;color:#ececec;font-weight:normal;transform:scaleX(0.9310);">Åsa Frostfeldt</div>
<div class="tx" id="t5" style="left:971px;top:67.49px;font-size:12.5px;color:#ececec;font-weight:normal;transform:scaleX(0.9285);">Управління Освіти</div>
<div class="tx" id="t6" style="left:819px;top:35.12px;font-size:15px;color:#ffffff;font-weight:bold;transform:scaleX(1.0559);">Åsa Frostfeldt</div>
<div class="tx" id="t7" style="left:89px;top:101.11px;font-size:9.6px;color:#3a3a3a;font-weight:normal;transform:scaleX(0.8341);">Spara automatiskt</div>
<div class="tx" id="t8" style="left:324.8px;top:101.11px;font-size:9.6px;color:#2c2c2c;font-weight:normal;transform:scaleX(0.9389);">Samstart - School collaboration&nbsp; ·&nbsp; Ukra...&nbsp; •&nbsp; Sparades till P:-enhet</div>
<div class="tx" id="t9" style="left:655.5px;top:100.77px;font-size:10.2px;color:#555;font-weight:normal;transform:scaleX(0.8826);">Sök</div>
<div class="tx" id="t10" style="left:64px;top:131.57px;font-size:10.2px;color:#333;font-weight:normal;transform:scaleX(1.0159);">Arkiv</div>
<div class="tx" id="t11" style="left:236px;top:131.57px;font-size:10.2px;color:#333;font-weight:normal;transform:scaleX(1.2084);">Start</div>
<div class="tx" id="t12" style="left:272.5px;top:131.57px;font-size:10.2px;color:#333;font-weight:normal;transform:scaleX(1.0943);">Infoga</div>
<div class="tx" id="t13" style="left:318.7px;top:131.57px;font-size:10.2px;color:#333;font-weight:normal;transform:scaleX(0.9379);">Rita</div>
<div class="tx" id="t14" style="left:352px;top:131.57px;font-size:10.2px;color:#333;font-weight:normal;transform:scaleX(0.9616);">Design</div>
<div class="tx" id="t15" style="left:398px;top:131.57px;font-size:10.2px;color:#333;font-weight:normal;transform:scaleX(1.0407);">Övergångar</div>
<div class="tx" id="t16" style="left:469px;top:131.57px;font-size:10.2px;color:#333;font-weight:normal;transform:scaleX(1.0739);">Animeringar</div>
<div class="tx" id="t17" style="left:542px;top:131.57px;font-size:10.2px;color:#333;font-weight:normal;transform:scaleX(1.0788);">Bildspel</div>
<div class="tx" id="t18" style="left:592.5px;top:131.57px;font-size:10.2px;color:#333;font-weight:normal;transform:scaleX(0.9639);">Spela in</div>
<div class="tx" id="t19" style="left:644.7px;top:131.57px;font-size:10.2px;color:#333;font-weight:normal;transform:scaleX(1.0126);">Granska</div>
<div class="tx" id="t20" style="left:697.8px;top:131.57px;font-size:10.2px;color:#333;font-weight:normal;transform:scaleX(0.9674);">Visa</div>
<div class="tx" id="t21" style="left:732px;top:131.57px;font-size:10.2px;color:#333;font-weight:normal;transform:scaleX(1.0767);">Hjälp</div>
<div class="tx" id="t22" style="left:103.8px;top:131.57px;font-size:10.2px;color:#3a3a3a;font-weight:bold;transform:scaleX(0.9356);">ARBETSFÖRMEDLINGEN</div>
<div class="tx" id="t23" style="left:1089.5px;top:131.27px;font-size:10.2px;color:#222;font-weight:normal;transform:scaleX(1.0047);">Spela in</div>
<div class="tx" id="t24" style="left:1179px;top:131.27px;font-size:10.2px;color:#ffffff;font-weight:normal;transform:scaleX(1.0416);">Delning</div>
<div class="tx" id="t25" style="left:76px;top:179.95px;font-size:10px;color:#3d3d3d;font-weight:normal;transform:scaleX(0.8824);">Skapa ny</div>
<div class="tx" id="t26" style="left:69px;top:192.45px;font-size:10px;color:#3d3d3d;font-weight:normal;transform:scaleX(0.9265);">presentation</div>
<div class="tx" id="t27" style="left:126.5px;top:179.95px;font-size:10px;color:#3d3d3d;font-weight:normal;transform:scaleX(0.9326);">Mallar</div>
<div class="tx" id="t28" style="left:161.5px;top:179.95px;font-size:10px;color:#3d3d3d;font-weight:normal;transform:scaleX(0.9650);">Hjälp</div>
<div class="tx" id="t29" style="left:92px;top:211.97px;font-size:9.2px;color:#444;font-weight:normal;transform:scaleX(0.8552);">uniForm mallsystem</div>
<div class="tx" id="t30" style="left:219.7px;top:154.55px;font-size:10px;color:#3d3d3d;font-weight:normal;transform:scaleX(0.8776);">Förhandsgranska</div>
<div class="tx" id="t31" style="left:219.7px;top:174.55px;font-size:10px;color:#3d3d3d;font-weight:normal;transform:scaleX(0.8757);">Skriv ut</div>
<div class="tx" id="t32" style="left:219.7px;top:194.45px;font-size:10px;color:#3d3d3d;font-weight:normal;transform:scaleX(0.8603);">Spara som PDF/XPS</div>
<div class="tx" id="t33" style="left:329.7px;top:179.95px;font-size:10px;color:#3d3d3d;font-weight:normal;transform:scaleX(0.9456);">Infoga</div>
<div class="tx" id="t34" style="left:311px;top:192.75px;font-size:10px;color:#3d3d3d;font-weight:normal;transform:scaleX(0.9503);">sidhuvud/sidfot</div>
<div class="tx" id="t35" style="left:279.4px;top:212.27px;font-size:9.2px;color:#444;font-weight:normal;transform:scaleX(0.8569);">Arkiv</div>
<div class="tx" id="t36" style="left:399.4px;top:179.95px;font-size:10px;color:#3d3d3d;font-weight:normal;transform:scaleX(0.9073);">Ny</div>
<div class="tx" id="t37" style="left:392.8px;top:192.75px;font-size:10px;color:#3d3d3d;font-weight:normal;transform:scaleX(0.9950);">bild</div>
<div class="tx" id="t38" style="left:441px;top:154.25px;font-size:10px;color:#3d3d3d;font-weight:normal;transform:scaleX(0.8824);">Layout</div>
<div class="tx" id="t39" style="left:441px;top:174.35px;font-size:10px;color:#3d3d3d;font-weight:normal;transform:scaleX(0.9135);">Återställ</div>
<div class="tx" id="t40" style="left:441px;top:193.75px;font-size:10px;color:#3d3d3d;font-weight:normal;transform:scaleX(0.9047);">Avsnitt</div>
<div class="tx" id="t41" style="left:426px;top:212.17px;font-size:9.2px;color:#444;font-weight:normal;transform:scaleX(0.8511);">Bilder</div>
<div class="tx" id="t42" style="left:667.5px;top:159.49px;font-size:12.5px;color:#a9a9a9;font-weight:normal;transform:scaleX(1.1985);">A</div>
<div class="tx" id="t43" style="left:677.5px;top:157.66px;font-size:7px;color:#a9a9a9;font-weight:normal;transform:scaleX(1.2133);">^</div>
<div class="tx" id="t44" style="left:688px;top:160.84px;font-size:11px;color:#a9a9a9;font-weight:normal;transform:scaleX(1.1574);">A</div>
<div class="tx" id="t45" style="left:697px;top:157.76px;font-size:8px;color:#a9a9a9;font-weight:normal;transform:scaleX(1.4971);">ˇ</div>
<div class="tx" id="t46" style="left:707.5px;top:159.94px;font-size:12px;color:#a9a9a9;font-weight:normal;transform:scaleX(1.1228);">A</div>
<div class="tx" id="t47" style="left:502px;top:184.34px;font-size:11px;color:#a9a9a9;font-weight:normal;transform:scaleX(0.9652);">F</div>
<div class="tx" id="t48" style="left:520.5px;top:184.34px;font-size:11px;color:#a9a9a9;font-weight:normal;transform:scaleX(1.0213);font-style:italic;">K</div>
<div class="tx" id="t49" style="left:541px;top:184.34px;font-size:11px;color:#a9a9a9;font-weight:normal;transform:scaleX(0.9430);">U</div>
<div class="tx" id="t50" style="left:560.5px;top:184.34px;font-size:11px;color:#a9a9a9;font-weight:normal;transform:scaleX(0.9532);">S</div>
<div class="tx" id="t51" style="left:576.5px;top:185.25px;font-size:10px;color:#a9a9a9;font-weight:normal;transform:scaleX(1.3483);">ab</div>
<div class="tx" id="t52" style="left:598px;top:182.45px;font-size:10px;color:#a9a9a9;font-weight:normal;transform:scaleX(1.0310);">AV</div>
<div class="tx" id="t53" style="left:629.5px;top:184.80px;font-size:10.5px;color:#a9a9a9;font-weight:normal;transform:scaleX(1.2068);">Aa</div>
<div class="tx" id="t54" style="left:697.5px;top:183.59px;font-size:11.5px;color:#a9a9a9;font-weight:normal;transform:scaleX(1.1731);">A</div>
<div class="tx" id="t55" style="left:591.5px;top:211.97px;font-size:9.2px;color:#444;font-weight:normal;transform:scaleX(0.8313);">Tecken</div>
<div class="tx" id="t56" style="left:801px;top:211.97px;font-size:9.2px;color:#444;font-weight:normal;transform:scaleX(0.7832);">Stycke</div>
<div class="tx" id="t57" style="left:915.4px;top:179.75px;font-size:10px;color:#3d3d3d;font-weight:normal;transform:scaleX(0.9059);">Former</div>
<div class="tx" id="t58" style="left:951px;top:179.75px;font-size:10px;color:#3d3d3d;font-weight:normal;transform:scaleX(0.8994);">Ikoner</div>
<div class="tx" id="t59" style="left:997px;top:179.75px;font-size:10px;color:#3d3d3d;font-weight:normal;transform:scaleX(1.0543);">3D-</div>
<div class="tx" id="t60" style="left:983px;top:193.85px;font-size:10px;color:#3d3d3d;font-weight:normal;transform:scaleX(0.9515);">modeller</div>
<div class="tx" id="t61" style="left:1033.6px;top:179.75px;font-size:10px;color:#3d3d3d;font-weight:normal;transform:scaleX(0.9023);">SmartArt</div>
<div class="tx" id="t62" style="left:1075.3px;top:179.75px;font-size:10px;color:#3d3d3d;font-weight:normal;transform:scaleX(0.9339);">Diagram</div>
<div class="tx" id="t63" style="left:990.8px;top:211.97px;font-size:9.2px;color:#444;font-weight:normal;transform:scaleX(0.8772);">Illustrationer</div>
<div class="tx" id="t64" style="left:61.7px;top:237.04px;font-size:11px;color:#505050;font-weight:normal;transform:scaleX(0.9469);">1</div>
<div class="tx" id="t65" style="left:61.7px;top:259.05px;font-size:11px;color:#505050;font-weight:normal;transform:scaleX(0.9469);">2</div>
<div class="tx" id="t66" style="left:61.7px;top:280.05px;font-size:11px;color:#505050;font-weight:normal;transform:scaleX(0.9469);">3</div>
<div class="tx" id="t67" style="left:61.7px;top:302.05px;font-size:11px;color:#505050;font-weight:normal;transform:scaleX(0.9469);">4</div>
<div class="tx" id="t68" style="left:61.7px;top:323.05px;font-size:11px;color:#505050;font-weight:normal;transform:scaleX(0.9469);">5</div>
<div class="tx" id="t69" style="left:61.7px;top:345.05px;font-size:11px;color:#505050;font-weight:normal;transform:scaleX(0.9469);">6</div>
<div class="tx" id="t70" style="left:61.7px;top:366.05px;font-size:11px;color:#505050;font-weight:normal;transform:scaleX(0.9469);">7</div>
<div class="tx" id="t71" style="left:61.7px;top:388.05px;font-size:11px;color:#505050;font-weight:normal;transform:scaleX(0.9469);">8</div>
<div class="tx" id="t72" style="left:61.7px;top:410.05px;font-size:11px;color:#505050;font-weight:normal;transform:scaleX(0.9469);">9</div>
<div class="tx" id="t73" style="left:55.7px;top:431.05px;font-size:11px;color:#505050;font-weight:normal;transform:scaleX(0.9633);">10</div>
<div class="tx" id="t74" style="left:55.7px;top:453.05px;font-size:11px;color:#505050;font-weight:normal;transform:scaleX(1.0331);">11</div>
<div class="tx" id="t75" style="left:55.7px;top:475.05px;font-size:11px;color:#505050;font-weight:normal;transform:scaleX(0.9633);">12</div>
<div class="tx" id="t76" style="left:55.7px;top:496.05px;font-size:11px;color:#505050;font-weight:normal;transform:scaleX(0.9633);">13</div>
<div class="tx" id="t77" style="left:55.7px;top:518.04px;font-size:11px;color:#c43e1c;font-weight:normal;transform:scaleX(0.9633);">14</div>
<div class="tx" id="t78" style="left:55.7px;top:539.04px;font-size:11px;color:#505050;font-weight:normal;transform:scaleX(0.9633);">15</div>
<div class="tx" id="t79" style="left:55.7px;top:561.04px;font-size:11px;color:#505050;font-weight:normal;transform:scaleX(0.9633);">16</div>
<div class="tx" id="t80" style="left:55.7px;top:583.04px;font-size:11px;color:#505050;font-weight:normal;transform:scaleX(0.9633);">17</div>
<div class="tx" id="t81" style="left:55.7px;top:604.04px;font-size:11px;color:#505050;font-weight:normal;transform:scaleX(0.9633);">18</div>
<div class="tx" id="t82" style="left:127px;top:681.59px;font-size:11.5px;color:#5a5a5a;font-weight:normal;transform:scaleX(0.9903);">Klicka för att lägga till anteckningar</div>
<div class="tx" id="t83" style="left:60.3px;top:705.36px;font-size:9px;color:#444;font-weight:normal;transform:scaleX(0.8838);">Bild 14 av 18</div>
<div class="tx" id="t84" style="left:132px;top:705.36px;font-size:9px;color:#444;font-weight:normal;transform:scaleX(0.8500);">Svenska (Sverige)</div>
<div class="tx" id="t85" style="left:222px;top:705.36px;font-size:9px;color:#444;font-weight:normal;transform:scaleX(0.9053);">Tillgänglighet: Klart</div>
<div class="tx" id="t86" style="left:893.5px;top:705.17px;font-size:9.2px;color:#333;font-weight:normal;transform:scaleX(0.8669);">Anteckningar</div>
<div class="tx" id="t87" style="left:1189.8px;top:705.36px;font-size:9px;color:#555;font-weight:normal;transform:scaleX(0.8813);">103 %</div>
<div class="tx" id="t88" style="left:353.5px;top:297.70px;font-size:30.5px;color:#1e1958;font-weight:bold;transform:scaleX(0.9273);">Some statistics</div>
<div class="tx" id="t89" style="left:464px;top:365.85px;font-size:20.5px;color:#111;font-weight:normal;transform:scaleX(1.0259);"><b>2 235 students</b> were identified for Samstart 2024/2025</div>
<div class="tx" id="t90" style="left:464px;top:392.18px;font-size:17.2px;color:#111;font-weight:normal;transform:scaleX(1.1029);">Before Samstart, around 1000 students were identified in the</div>
<div class="tx" id="t91" style="left:464px;top:415.03px;font-size:17.2px;color:#111;font-weight:normal;transform:scaleX(1.0927);">whole country.</div>
<div class="tx" id="t92" style="left:465.5px;top:487.45px;font-size:20.5px;color:#111;font-weight:normal;transform:scaleX(1.0238);"><b>6 200 participants</b> since 2019, September</div>
<div class="tx" id="t93" style="left:465px;top:555.12px;font-size:21.3px;color:#111;font-weight:normal;transform:scaleX(0.9873);">Approximately <b>3 500 transitions to work and studies</b></div>
<div class="tx" id="t94" style="left:465px;top:581.05px;font-size:20.5px;color:#111;font-weight:normal;transform:scaleX(1.0198);">since 2019, September</div>
<div class="tx" id="t95" style="left:896px;top:250.55px;font-size:31px;color:#1c4e80;font-weight:normal;transform:scaleX(0.9169);-webkit-text-stroke:0.5px #1c4e80;">SamSTART</div>
<div class="tx" id="t96" style="left:842.5px;top:650.74px;font-size:3.6px;color:#34508f;font-weight:bold;transform:scaleX(1.0266);">Medfinansieras av</div>
<div class="tx" id="t97" style="left:840.5px;top:655.24px;font-size:3.6px;color:#34508f;font-weight:bold;transform:scaleX(1.0477);">Europeiska unionen</div>
<div class="tx" id="t98" style="left:907px;top:628.46px;font-size:11.2px;color:#2a2f3a;font-weight:bold;transform:scaleX(0.8978);letter-spacing:0.8px;">ARBETSFÖRMEDLINGEN</div>
<div class="tx" id="t99" style="left:907px;top:641.01px;font-size:6.4px;color:#2a2f3a;font-weight:bold;transform:scaleX(0.9126);letter-spacing:0.5px;">SWEDISH PUBLIC EMPLOYMENT SERVICE</div>
</body></html>
